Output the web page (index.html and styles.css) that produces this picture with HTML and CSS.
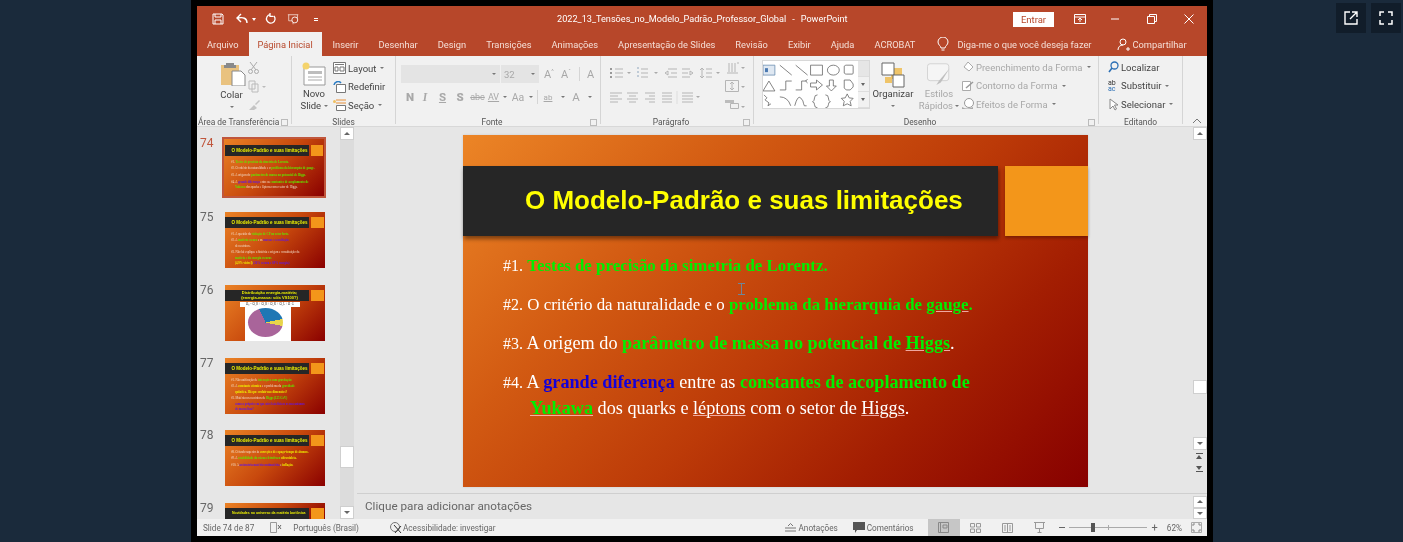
FILE: index.html
```html
<!DOCTYPE html>
<html lang="pt-BR">

<head>
  <meta charset="UTF-8">
  <title>PowerPoint</title>
  <link rel="stylesheet" href="styles.css">
</head>

<body>

  <div class="frame">
    <div class="win">

      <!-- barra de titulo -->
      <div class="titlebar">
        <div class="qat">
          <svg width="12" height="12" viewBox="0 0 12 12" class="qat-save"><path d="M1 1h9l1 1v9H1z M3 1v3h6V1 M3 11V7h6v4" fill="none" stroke="#fff"/></svg>
          <svg width="14" height="12" viewBox="0 0 14 12" class="qat-undo"><path d="M12 10C12 5 8 4 3 5M6 1L2 5l4 4" fill="none" stroke="#fff" stroke-width="1.4"/></svg>
          <span class="caret-w"></span>
          <svg width="12" height="12" viewBox="0 0 12 12" class="qat-redo"><path d="M9 3a4.3 4.3 0 1 1-4-1.4M5 0v3.4h3.4" fill="none" stroke="#fff" stroke-width="1.3"/></svg>
          <svg width="13" height="13" viewBox="0 0 15 13" class="qat-show"><path d="M1 1h12M2 1v7h10V1M7 8v4" fill="none" stroke="#f0d5cc"/><circle cx="9" cy="7" r="3.4" fill="#b7472a" stroke="#fff"/></svg>
          <span class="qat-more"></span>
        </div>
        <div class="doc-title"><span class="doc-name">2022_13_Tensões_no_Modelo_Padrão_Professor_Global</span><span class="doc-sep">-</span>PowerPoint</div>
        <div class="win-ctrl">
          <button class="signin">Entrar</button>
          <svg width="12" height="10" viewBox="0 0 12 10" class="ctrl-ribbon"><path d="M.5.5h11v9H.5zM.5 3h11M6 8V4M4 6l2-2 2 2" fill="none" stroke="#fff"/></svg>
          <svg width="10" height="10" viewBox="0 0 10 10" class="ctrl-min"><path d="M1 5h8" stroke="#fff"/></svg>
          <svg width="10" height="10" viewBox="0 0 10 10" class="ctrl-max"><path d="M.5 2.5h7v7h-7zM2.5 2.5v-2h7v7h-2" fill="none" stroke="#fff"/></svg>
          <svg width="10" height="10" viewBox="0 0 10 10" class="ctrl-close"><path d="M.5.5l9 9M9.5.5l-9 9" stroke="#fff"/></svg>
        </div>
      </div>

      <!-- abas -->
      <div class="tabs">
        <span class="tab tab-file">Arquivo</span>
        <span class="tab tab-active">Página Inicial</span>
        <span class="tab tab-ins">Inserir</span>
        <span class="tab tab-next">Desenhar</span>
        <span class="tab tab-next">Design</span>
        <span class="tab tab-next">Transições</span>
        <span class="tab tab-next">Animações</span>
        <span class="tab tab-next">Apresentação de Slides</span>
        <span class="tab tab-next">Revisão</span>
        <span class="tab tab-next">Exibir</span>
        <span class="tab tab-next">Ajuda</span>
        <span class="tab tab-next">ACROBAT</span>
        <svg width="12" height="15" viewBox="0 0 12 15" class="bulb"><path d="M4 11c0-2-3-3-3-6a5 5 0 0 1 10 0c0 3-3 4-3 6zM4.500 13h3" fill="none" stroke="#fff"/></svg>
        <span class="tab tab-tell">Diga-me o que você deseja fazer</span>
        <svg width="13" height="13" viewBox="0 0 13 13" class="share-ico"><circle cx="6" cy="4" r="3" fill="none" stroke="#fff"/><path d="M1 12c0-3 2-5 5-5M9 11h4M11 9v4" fill="none" stroke="#fff"/></svg>
        <span class="tab tab-share">Compartilhar</span>
      </div>

      <!-- faixa de opcoes -->
      <div class="ribbon">

        <div class="group g-clip">
          <div class="group-body clip-body">
            <div class="big-btn paste">
              <svg width="26" height="24" viewBox="0 0 26 24"><path d="M1 3h18v20H1z" fill="#e9c27f"/><path d="M6 3V1h8v2h2v3H4V3z" fill="#8a8a8a"/><path d="M12 9h9l4 4v11H12z" fill="#fff" stroke="#888"/></svg>
              <span class="lbl">Colar</span>
              <span class="caret"></span>
            </div>
            <div class="clip-small">
              <svg width="11" height="13" viewBox="0 0 11 13"><path d="M2 1l6 8M9 1L3 9" stroke="#aaa" fill="none"/><circle cx="2.500" cy="10.500" r="2" fill="none" stroke="#aaa"/><circle cx="8.500" cy="10.500" r="2" fill="none" stroke="#aaa"/></svg>
              <svg width="18" height="13" viewBox="0 0 18 13"><path d="M1 1h6v8H1zM4 4h6v8H4z" fill="#f1f1f1" stroke="#bbb"/><path d="M14 6h4l-2 2z" fill="#bbb"/></svg>
              <svg width="13" height="12" viewBox="0 0 13 12"><path d="M1 11l5-5 3 3-3 2zM7 5l4-4 1 1-4 4z" fill="#c4c4c4"/></svg>
            </div>
          </div>
          <div class="group-label">Área de Transferência<span class="launch"></span></div>
        </div>

        <div class="group g-slides">
          <div class="group-body slides-body">
            <div class="big-btn newslide">
              <svg width="24" height="24" viewBox="0 0 24 24"><path d="M2 5h21v18H2z" fill="#fff" stroke="#999"/><path d="M6 9h14v3H6z" fill="#bdbdbd"/><path d="M6 15h14M6 18h14" stroke="#aaa"/><circle cx="4" cy="4" r="3.500" fill="#f4d36b"/></svg>
              <span class="lbl">Novo</span>
              <span class="lbl">Slide <i class="caret caret-in"></i></span>
            </div>
            <div class="stack">
              <div class="row-item"><svg width="13" height="12" viewBox="0 0 13 12"><path d="M.5.5h12v11H.5zM2 2.500h9M2 5h3v4H2zM7 5h4v4H7z" fill="#fff" stroke="#777"/></svg>Layout <i class="caret"></i></div>
              <div class="row-item"><svg width="13" height="12" viewBox="0 0 13 12"><path d="M3.500 3.500h9v8h-9z" fill="#fff" stroke="#777"/><path d="M1 4a4 4 0 0 1 7-2" stroke="#2b7cc4" fill="none" stroke-width="1.500"/></svg>Redefinir</div>
              <div class="row-item"><svg width="13" height="12" viewBox="0 0 13 12"><path d="M3 1h10M3 4h10" stroke="#e8913a"/><path d="M3.500 6.500h9v5h-9z" fill="#fff" stroke="#777"/><circle cx="1.500" cy="2.500" r="1.500" fill="#f0c060"/></svg>Seção <i class="caret"></i></div>
            </div>
          </div>
          <div class="group-label">Slides</div>
        </div>

        <div class="group g-font">
          <div class="group-body font-body">
            <div class="font-top">
              <div class="font-name"><i class="caret"></i></div>
              <div class="font-size">32<i class="caret"></i></div>
              <span class="fbtn fbig">A<sup>^</sup></span>
              <span class="fbtn fsmall">A<sup>ˇ</sup></span>
              <span class="fsep"></span>
              <span class="fbtn fclear">A</span>
            </div>
            <div class="font-bot">
              <b class="f-n">N</b><i class="f-i">I</i><span class="f-u">S</span><b class="f-s">S</b><span class="f-abc">abc</span><span class="f-av">AV</span><i class="caret c-av"></i><span class="f-aa">Aa</span><i class="caret"></i><span class="fsep"></span><span class="f-hl">ab</span><i class="caret c-hl"></i><span class="f-col">A</span><i class="caret c-col"></i>
            </div>
          </div>
          <div class="group-label label-launch">Fonte<span class="launch"></span></div>
        </div>

        <div class="group g-para">
          <div class="group-body para-body">
            <svg width="144" height="54" viewBox="0 0 144 54" class="para-icons" fill="none" stroke="#b5b5b5">
              <path d="M4 8h2v2H4zM4 12h2v2H4zM4 16h2v2H4z" fill="#999" stroke="none"/>
              <path d="M9 9h8M9 13h8M9 17h8M35 9h7M35 13h7M35 17h7"/>
              <path d="M31 8h2M31 12h2M31 16h2" stroke="#8fa6bd"/>
              <path d="M59 13l3-2v4zM62 9h9M65 13h6M62 17h9M87 13l-3-2v4zM76 9h8M76 13h6M76 17h8" />
              <path d="M96 8v10M94 10l2-2 2 2M94 16l2 2 2-2M100 9h6M100 13h6M100 17h6"/>
              <path d="M123 3v9M126 3v9M129 3v9M131 3h2M121 13h11"/>
              <path d="M21 12h4l-2 2zM48 12h4l-2 2zM110 12h4l-2 2zM135 7h4l-2 2zM135 26h4l-2 2zM135 46h4l-2 2zM90 36h4l-2 2z" fill="#aaa" stroke="none"/>
              <path d="M4 33h12M4 36h8M4 39h12M4 42h8M21 33h11M23 36h7M21 39h11M23 42h7M39 33h10M43 36h6M39 39h10M43 42h6M56 33h10M56 36h10M56 39h10M56 42h10M76 33h11M76 36h11M76 39h11M76 42h11"/>
              <path d="M71 31v13" stroke="#ddd"/>
              <path d="M119.500 20.500h13v11h-13zM126 22v8M124 24l2-2 2 2M124 28l2 2 2-2"/>
              <path d="M119 40h9v3h-9z" fill="#bcbcbc" stroke="none"/>
              <path d="M124.500 43.500h8v5h-8z"/>
            </svg>
          </div>
          <div class="group-label label-launch">Parágrafo<span class="launch"></span></div>
        </div>

        <div class="group g-draw">
          <div class="group-body draw-body">
            <div class="gallery">
              <svg width="96" height="47" viewBox="0 0 96 47" fill="none" stroke="#666" stroke-width=".8">
                <g transform="translate(-3 0)">
                  <path d="M3 4h12v10H3z" fill="#dfe8f2" stroke="#6a8db0"/><path d="M5 7h3v4H5z" fill="#4a78b0" stroke="none"/>
                  <path d="M20 4l12 10M36 4l12 10M51 4h12v10H51zM85 5q1-1 2-1h6q1 0 1 1v7q0 1-1 1h-6q-1 0-2-1z"/>
                  <ellipse cx="74" cy="9" rx="6" ry="5"/>
                  <path d="M3 30l6-10 6 10zM20 29h6V20h6M36 29h6V20h5M48 22l-2-2 2-2M51 22h6v-3l6 5-6 5v-3h-6zM70 19h4v6h3l-5 5-5-5h3zM85 19h6l3 4v3l-3 3h-4l-2-2z"/>
                  <path d="M4 34l3 3-2 2 4 3-1 3 3-2M20 36q8 0 11 9M35 45q3-11 6-8t3 6 3 2M58 34q-3 0-3 3t-2 4q2 0 2 3t3 3M66 34q3 0 3 3t2 4q-2 0-2 3t-3 3"/>
                  <path d="M88 33l2 4 4 .5-3 3 1 4.500-4-2-4 2 1-4.500-3-3 4-.5z"/>
                </g>
              </svg>
              <div class="gallery-scroll">
                <span class="gs gs-up"></span><span class="gs gs-down"></span><span class="gs gs-more"></span>
              </div>
            </div>
            <div class="big-btn arrange">
              <svg width="24" height="26" viewBox="0 0 24 26"><path d="M10 6h11v11H10z" fill="#efc469"/><path d="M1 1h12v12H1z" fill="#fff" stroke="#666"/><path d="M12 13h11v12H12z" fill="#fff" stroke="#666"/><path d="M4 15h7v6H4z" fill="#efc469"/></svg>
              <span class="lbl">Organizar</span>
              <span class="caret"></span>
            </div>
            <div class="big-btn quick">
              <svg width="24" height="24" viewBox="0 0 26 27"><path d="M3 2h18q3 0 3 3v13q0 3-3 3H3q-3 0-3-3V5q0-3 3-3z" fill="#f5f5f5" stroke="#cfcfcf"/><path d="M25 7L13 21l-3 5 5-3z" fill="#bfbfbf"/></svg>
              <span class="lbl">Estilos</span>
              <span class="lbl">Rápidos <i class="caret"></i></span>
            </div>
            <div class="stack stack-off">
              <div class="row-item"><svg width="12" height="12" viewBox="0 0 12 12"><path d="M2 6l4-5 5 5-4 4z" fill="#fff" stroke="#aaa"/></svg>Preenchimento da Forma <i class="caret"></i></div>
              <div class="row-item"><svg width="12" height="12" viewBox="0 0 12 12"><path d="M.5 1.500h8v9h-8z" fill="#fff" stroke="#aaa"/><path d="M4 8l7-6" stroke="#999" stroke-width="1.500"/></svg>Contorno da Forma <i class="caret"></i></div>
              <div class="row-item"><svg width="12" height="12" viewBox="0 0 12 12"><circle cx="7" cy="5" r="4.500" fill="#fff" stroke="#999"/><path d="M0 9q5 3 11 0v2H0z" fill="#aaa"/></svg>Efeitos de Forma <i class="caret"></i></div>
            </div>
          </div>
          <div class="group-label label-launch">Desenho<span class="launch"></span></div>
        </div>

        <div class="group g-edit">
          <div class="group-body edit-body">
            <div class="stack stack-edit">
              <div class="row-item"><svg width="11" height="12" viewBox="0 0 11 12"><circle cx="6.500" cy="4.500" r="3.500" fill="none" stroke="#2b6fb5" stroke-width="1.300"/><path d="M4 7L1 11" stroke="#2b6fb5" stroke-width="1.500"/></svg>Localizar</div>
              <div class="row-item"><span class="abac"><b>ab</b><em>ac</em></span>Substituir <i class="caret caret-far"></i></div>
              <div class="row-item"><svg width="11" height="13" viewBox="0 0 11 13"><path d="M2 1v10l3-3 2 4 1.500-1-2-4h3.500z" fill="#fff" stroke="#888"/></svg>Selecionar <i class="caret"></i></div>
            </div>
          </div>
          <div class="group-label">Editando</div>
        </div>

        <svg width="10" height="6" viewBox="0 0 10 6" class="collapse"><path d="M1 5l4-4 4 4" fill="none" stroke="#777"/></svg>
      </div>

      <!-- area principal -->
      <div class="main">
        <div class="thumbs">
          <div class="thumb-list">

            <div class="thumb-row thumb-sel">
              <span class="num">74</span>
              <div class="mini">
                <div class="mini-head"><div class="mini-band">O Modelo-Padrão e suas limitações</div><span class="mini-sq"></span></div>
                <div class="mini-body">
                  <p>#1. <em class="g">Testes de precisão da simetria de Lorentz.</em></p>
                  <p>#2. O critério da naturalidade e o <em class="g">problema da hierarquia de gauge.</em></p>
                  <p>#3. A origem do <em class="g">parâmetro de massa no potencial de Higgs.</em></p>
                  <p>#4. A <em class="b">grande diferença</em> entre as <em class="g">constantes de acoplamento de</em></p>
                  <p class="in"><em class="g">Yukawa</em> dos quarks e léptons com o setor de Higgs.</p>
                </div>
              </div>
            </div>

            <div class="thumb-row">
              <span class="num">75</span>
              <div class="mini">
                <div class="mini-head"><div class="mini-band">O Modelo-Padrão e suas limitações</div><span class="mini-sq"></span></div>
                <div class="mini-body">
                  <p>#1. A questão da <em class="g">violação de CP no setor forte.</em></p>
                  <p>#2. A <em class="g">matéria escura</em> e as <em class="b">massas e a oscilação</em></p>
                  <p class="in">de neutrinos.</p>
                  <p>#3. Não há explique a história e origem e constituição da</p>
                  <p class="in"><em class="g">matéria e da energia escuras</em></p>
                  <p class="in"><em class="y">(4,9% visível)</em> <em class="b">(26% escura e 69% energia)</em></p>
                </div>
              </div>
            </div>

            <div class="thumb-row">
              <span class="num">76</span>
              <div class="mini">
                <div class="mini-head"><div class="mini-band mini-two">Distribuição energia-matéria;<br>(energia-massa: sóis VS100?)</div><span class="mini-sq"></span></div>
                <div class="mini-chart">
                  <div class="mini-formula">Ω₀ = Ω_R + Ω_B + Ω_K + Ω_L + Ω_G</div>
                  <div class="mini-pie"><span class="pie"></span></div>
                </div>
              </div>
            </div>

            <div class="thumb-row thumb-short">
              <span class="num">77</span>
              <div class="mini">
                <div class="mini-head"><div class="mini-band">O Modelo-Padrão e suas limitações</div><span class="mini-sq"></span></div>
                <div class="mini-body">
                  <p>#1. Não unificação de <em class="g">interações com gravitação</em></p>
                  <p>#2. A <em class="y">constante cósmica</em> e o problema da <em class="g">gravidade</em></p>
                  <p class="in"><em class="y">quântica. Há que evoluir nas dimensões?</em></p>
                  <p>#3. Matéria nos neutrinos de <em class="g">Higgs (125 GeV)</em></p>
                  <p class="in"><em class="b">como o próprio em que nível são físicos os mecanismos</em></p>
                  <p class="in"><em class="b">de massa fina?</em></p>
                </div>
              </div>
            </div>

            <div class="thumb-row">
              <span class="num">78</span>
              <div class="mini">
                <div class="mini-head"><div class="mini-band">O Modelo-Padrão e suas limitações</div><span class="mini-sq"></span></div>
                <div class="mini-body">
                  <p>#8. O fundo superior às <em class="y">correções de espaço-tempo de átomos.</em></p>
                  <p>#9. A <em class="g">estabilidade do vácuo eletrofraco</em> <em class="y">ultravioleta.</em></p>
                  <p>#10. A <em class="b">assimetria matéria-antimatéria</em> e <em class="y">inflação.</em></p>
                </div>
              </div>
            </div>

            <div class="thumb-row thumb-cut">
              <span class="num">79</span>
              <div class="mini">
                <div class="mini-head"><div class="mini-band mini-left">Novidades no universo da matéria bariônica</div><span class="mini-sq"></span></div>
              </div>
            </div>

          </div>

          <div class="vscroll vscroll-thumbs">
            <span class="sbtn sbtn-up"></span>
            <span class="sthumb"></span>
            <span class="sbtn sbtn-down"></span>
          </div>
        </div>

        <div class="edit">
          <div class="edit-top">
            <div class="canvas">
              <div class="slide">
                <div class="slide-head">
                  <h1 class="slide-band">O Modelo-Padrão e suas limitações</h1>
                  <span class="slide-sq"></span>
                </div>
                <div class="slide-body">
                  <p class="line line-1"><small>#1.</small> <b class="green">Testes de precisão da simetria de Lorentz.</b></p>
                  <p class="line line-2"><small>#2.</small> O critério da naturalidade e o <b class="green">problema da hierarquia de <u class="sp">gauge</u>.</b></p>
                  <p class="line line-3"><small>#3.</small> A origem do <b class="green">parâmetro de massa no potencial de <u class="sp">Higgs</u></b>.</p>
                  <p class="line line-4"><small>#4.</small> A <b class="blue">grande diferença</b> entre as <b class="green">constantes de acoplamento de</b></p>
                  <p class="line line-5"><b class="green"><u class="sp">Yukawa</u></b> dos quarks e <u class="sp">léptons</u> com o setor de <u class="sp">Higgs</u>.</p>
                </div>
                <svg width="7" height="12" viewBox="0 0 7 12" class="ibeam"><path d="M0 .5h7M0 11.500h7M3.500 0v12" stroke="#6f8598"/></svg>
              </div>
            </div>
            <div class="vscroll vscroll-edit">
              <span class="sbtn sbtn-up"></span>
              <span class="sthumb sthumb-edit"></span>
              <span class="sbtn sbtn-down"></span>
              <span class="snav snav-up"></span>
              <span class="snav snav-down"></span>
            </div>
          </div>
          <div class="notes">
            <span class="notes-text">Clique para adicionar anotações</span>
            <div class="vscroll vscroll-notes">
              <span class="sbtn sbtn-up"></span>
              <span class="sbtn sbtn-down"></span>
            </div>
          </div>
        </div>
      </div>

      <!-- barra de status -->
      <div class="status">
        <span class="st-slide">Slide 74 de 87</span>
        <svg width="12" height="11" viewBox="0 0 12 11" class="st-check"><path d="M.5.5h6v10h-6z" fill="none" stroke="#999"/><path d="M8 3l3 4M11 3L8 7" stroke="#666"/></svg>
        <span class="st-lang">Português (Brasil)</span>
        <svg width="12" height="13" viewBox="0 0 12 13" class="st-acc"><circle cx="5" cy="6" r="4.500" fill="none" stroke="#777"/><path d="M4 4l7 8M11 5l-6 7" stroke="#333"/></svg>
        <span class="st-acc-text">Acessibilidade: investigar</span>
        <div class="st-right">
          <svg width="11" height="9" viewBox="0 0 11 9" class="st-ico"><path d="M0 5h11M0 8h11M3 3l2.500-2.500L8 3" fill="none" stroke="#777"/></svg>
          <span class="st-notes">Anotações</span>
          <svg width="12" height="11" viewBox="0 0 12 11" class="st-ico st-ico-com"><path d="M0 0h12v8H4l-2 3V8H0z" fill="#555"/></svg>
          <span class="st-com">Comentários</span>
          <span class="view view-on"><svg width="11" height="11" viewBox="0 0 11 11"><path d="M.5.500h10v10H.5zM2.500.500v10" fill="none" stroke="#888"/><path d="M5 3h4v3H5z" fill="none" stroke="#888"/></svg></span>
          <span class="view"><svg width="11" height="10" viewBox="0 0 11 10"><path d="M.5.5h4v3.500h-4zM6.500.5h4v3.500h-4zM.5 6h4v3.500h-4zM6.500 6h4v3.500h-4z" fill="none" stroke="#999"/></svg></span>
          <span class="view"><svg width="11" height="10" viewBox="0 0 11 10"><path d="M.5.5h10v9H.5zM5.500.5v9M2 3h2M2 5h2M2 7h2M7 3h2M7 5h2M7 7h2" fill="none" stroke="#999"/></svg></span>
          <span class="view"><svg width="11" height="11" viewBox="0 0 11 11"><path d="M0 .5h11M1.500.5v6h8v-6M5.500 6.500v4M3.500 10.500h4" fill="none" stroke="#999"/></svg></span>
          <span class="zoom-minus"></span>
          <div class="slider"><span class="slider-mid"></span><span class="slider-knob"></span></div>
          <span class="zoom-plus">+</span>
          <span class="zoom-val">62%</span>
          <svg width="11" height="11" viewBox="0 0 11 11" class="st-fit"><path d="M.5.5h10v10H.5z" fill="none" stroke="#aaa"/><path d="M2 4V2h2M7 2h2v2M9 7v2H7M4 9H2V7" fill="none" stroke="#888"/></svg>
        </div>
      </div>

    </div>
  </div>

  <div class="overlay-btns">
    <span class="ov-btn"><svg width="14" height="14" viewBox="0 0 14 14"><path d="M6 1H1v12h12V8M8 1h5v5M13 1L6 8" fill="none" stroke="#fff" stroke-width="1.400"/></svg></span>
    <span class="ov-btn"><svg width="14" height="14" viewBox="0 0 14 14"><path d="M1 5V1h4M9 1h4v4M13 9v4H9M5 13H1V9" fill="none" stroke="#fff" stroke-width="1.500"/></svg></span>
  </div>

</body>

</html>
```

FILE: styles.css
```css
* {
  box-sizing: border-box;
}

html,
body {
  margin: 0;
  height: 542px;
  overflow: hidden;
}

body {
  background: #1a2a3b;
  font-family: "Roboto", "Liberation Sans", sans-serif;
  font-size: 9.5px;
  color: #444;
}

.frame {
  width: 1022px;
  height: 542px;
  margin-left: 191px;
  padding: 6px 6px 6px 6px;
  background: #000;
}

.win {
  width: 1010px;
  height: 530px;
  display: flex;
  flex-direction: column;
  background: #e6e6e6;
  filter: blur(0.3px);
}

/* title bar */
.titlebar {
  height: 26px;
  display: flex;
  align-items: center;
  background: #b7472a;
  color: #fff;
}

.qat {
  width: 360px;
  display: flex;
  align-items: center;
  padding-left: 15px;
}

.qat-undo {
  margin-left: 11px;
}

.caret-w {
  margin-left: 3px;
  border: 2px solid transparent;
  border-top: 3px solid #fff;
  border-bottom: 0;
}

.qat-redo {
  margin-left: 9px;
}

.qat-show {
  margin-left: 10px;
}

.qat-more {
  margin-left: 14px;
  width: 4px;
  height: 3px;
  border-top: 1px solid #fff;
  border-bottom: 1px solid #fff;
}

.doc-title {
  font-size: 9.150px;
  white-space: nowrap;
}

.doc-sep {
  margin: 0 6px;
}

.win-ctrl {
  margin-left: auto;
  display: flex;
  align-items: center;
  padding-right: 13px;
}

.signin {
  width: 41px;
  height: 15px;
  border: 0;
  padding: 0;
  background: #fff;
  color: #b7472a;
  font: 9.5px "Roboto", sans-serif;
}

.ctrl-ribbon {
  margin-left: 20px;
}

.ctrl-min {
  margin-left: 24px;
}

.ctrl-max {
  margin-left: 27px;
}

.ctrl-close {
  margin-left: 27px;
}

/* tabs */
.tabs {
  height: 24px;
  display: flex;
  align-items: center;
  background: #b7472a;
  color: #f5dfd7;
  padding-left: 10px;
  white-space: nowrap;
}

.tab {
  flex: none;
  font-size: 9.300px;
}

.tab-active {
  margin-left: 10px;
  width: 73px;
  height: 24px;
  line-height: 25px;
  text-align: center;
  background: #f1f1f1;
  color: #b7472a;
}

.tab-ins {
  margin-left: 11px;
}

.tab-next {
  margin-left: 20px;
}

.bulb {
  flex: none;
  margin-left: 22px;
}

.tab-tell {
  margin-left: 8px;
}

.share-ico {
  flex: none;
  margin-left: 25px;
}

.tab-share {
  margin-left: 3px;
}

/* ribbon */
.ribbon {
  height: 71px;
  display: flex;
  background: #f1f1f1;
  border-bottom: 1px solid #d8d8d8;
  color: #444;
}

.group {
  display: flex;
  flex-direction: column;
  border-right: 1px solid #d5d5d5;
  margin-bottom: 2px;
}

.group-body {
  height: 61px;
  display: flex;
}

.group-label {
  height: 7px;
  position: relative;
  text-align: center;
  font-size: 8.400px;
  line-height: 11px;
  color: #555;
  white-space: nowrap;
}

.label-launch {
  padding-right: 12px;
}

.launch {
  position: absolute;
  right: 3px;
  top: 2px;
  width: 7px;
  height: 7px;
  border: 1px solid #bbb;
}

.g-clip {
  width: 95px;
}

.g-slides {
  width: 104px;
}

.g-font {
  width: 205px;
}

.g-para {
  width: 153px;
}

.g-draw {
  width: 345px;
}

.g-edit {
  width: 84px;
}

.g-clip .group-label {
  text-align: left;
  padding-left: 1px;
}

.big-btn {
  display: flex;
  flex-direction: column;
  align-items: center;
}

.big-btn svg {
  flex: none;
}

.lbl {
  line-height: 12px;
  white-space: nowrap;
}

.caret {
  display: inline-block;
  flex: none;
  width: 0;
  height: 0;
  border-left: 2px solid transparent;
  border-right: 2px solid transparent;
  border-top: 2px solid #777;
  vertical-align: middle;
}

.clip-body {
  padding: 6px 0 0 22px;
}

.paste {
  width: 28px;
}

.paste .lbl {
  margin-top: 3px;
  margin-left: -3px;
}

.paste .caret {
  margin-top: 5px;
  margin-left: -3px;
}

.clip-small {
  display: flex;
  flex-direction: column;
  gap: 6px;
  margin: -1px 0 0 1px;
}

.slides-body {
  padding: 6px 0 0 9px;
}

.newslide {
  width: 26px;
}

.newslide .lbl:nth-of-type(1) {
  margin-top: 2px;
}

.stack {
  display: flex;
  flex-direction: column;
  gap: 6.500px;
  margin-left: 6px;
}

.row-item {
  display: flex;
  align-items: center;
  gap: 2px;
  height: 12px;
  white-space: nowrap;
}

.row-item .caret {
  margin-left: 2px;
}

/* fonte */
.font-body {
  flex-direction: column;
  padding: 9px 0 0 5px;
  color: #a8a8a8;
}

.font-top {
  display: flex;
  align-items: center;
  height: 18px;
}

.font-name {
  flex: none;
  width: 99px;
  height: 18px;
  background: #e4e4e4;
  display: flex;
  align-items: center;
  justify-content: flex-end;
  padding-right: 4px;
}

.font-size {
  flex: none;
  width: 38px;
  height: 18px;
  margin-left: 1px;
  background: #e4e4e4;
  display: flex;
  align-items: center;
  justify-content: space-between;
  padding: 0 4px 0 3px;
}

.fbtn {
  flex: none;
  font-size: 11px;
  margin-left: 3px;
  width: 14px;
}

.fbig {
  margin-left: 5px;
}

.fbtn sup {
  font-size: 6px;
  line-height: 0;
}

.fsep {
  flex: none;
  width: 1px;
  height: 14px;
  background: #d5d5d5;
  margin: 0 4px;
}

.font-bot {
  display: flex;
  align-items: center;
  height: 18px;
  margin-top: 5px;
  font-size: 11.500px;
  padding-left: 2px;
  font-weight: 700;
}

.font-bot > span,
.font-bot > b,
.font-bot > i:not(.caret) {
  flex: none;
  text-align: center;
}

.f-n {
  width: 14px;
}

.f-i {
  width: 16px;
  font-family: "Liberation Serif", serif;
}

.f-u {
  width: 19px;
  text-decoration: underline;
}

.f-s {
  width: 16px;
}

.f-abc {
  width: 19px;
  font-size: 9px;
  font-weight: 400;
  text-decoration: line-through;
}

.f-av {
  width: 13px;
  font-size: 9px;
  font-weight: 400;
  text-decoration: underline;
}

.c-av {
  margin-left: 3px;
}

.f-aa {
  width: 22px;
  font-weight: 400;
  font-size: 10.500px;
}

.f-hl {
  width: 12px;
  font-size: 8px;
  font-weight: 400;
  text-decoration: underline;
}

.c-hl {
  margin-left: 7px;
}

.f-col {
  width: 22px;
  font-weight: 400;
}

.c-col {
  margin-left: 1px;
}

.para-body {
  padding: 4px 0 0 5px;
}

/* desenho */
.draw-body {
  padding: 4px 0 0 8px;
}

.gallery {
  display: flex;
  flex: none;
  width: 108px;
  height: 49px;
  border: 1px solid #d8d8d8;
  background: #fff;
}

.gallery-scroll {
  width: 11px;
  display: flex;
  flex-direction: column;
  background: #f1f1f1;
  margin-left: auto;
}

.gs {
  flex: 1;
  border-bottom: 1px solid #ddd;
  position: relative;
}

.gs-up {
  background: #e6e6e6;
}

.gs-down::after,
.gs-more::after {
  content: "";
  position: absolute;
  left: 3px;
  top: 6px;
  border: 2px solid transparent;
  border-top: 3px solid #666;
  border-bottom: 0;
}

.arrange {
  flex: none;
  width: 46px;
  margin-left: 0;
  padding-top: 2px;
}

.arrange .caret {
  margin-top: 5px;
}

.quick {
  flex: none;
  width: 40px;
  margin-left: 3px;
  padding-top: 2px;
  color: #a8a8a8;
}

.quick .lbl:nth-of-type(1) {
  margin-top: 2px;
}

.stack-off {
  color: #a8a8a8;
  padding-top: 1px;
  margin-left: 3px;
}

.edit-body {
  padding-top: 5px;
}

.stack-edit {
  margin-left: 9px;
}

.abac {
  width: 11px;
  display: flex;
  flex-direction: column;
  font-size: 7px;
  line-height: 6px;
}

.abac b {
  color: #333;
  font-weight: 400;
}

.abac em {
  font-style: normal;
  color: #2b6fb5;
}

.caret-far {
  margin-left: 6px;
}

.collapse {
  margin: 62px 0 0 9px;
}

/* principal */
.main {
  flex: 1;
  display: flex;
  min-height: 0;
}

.thumbs {
  flex: none;
  width: 160px;
  display: flex;
  border-right: 3px solid #e6e6e6;
  overflow: hidden;
}

.thumb-list {
  width: 143px;
  height: 392px;
  overflow: hidden;
  background: #e6e6e6;
  padding-top: 11px;
}

.thumb-row {
  display: flex;
  height: 73px;
  padding-left: 3px;
}

.thumb-short {
  height: 72px;
}

.thumb-sel {
  height: 74px;
}

.num {
  flex: none;
  width: 25px;
  font-size: 12px;
  color: #666;
  line-height: 10px;
}

.thumb-sel .num {
  color: #c0563c;
}

.mini {
  width: 100px;
  height: 56px;
  overflow: hidden;
  background: linear-gradient(135deg, #ea8225 0%, #c8490d 50%, #8a0000 100%);
  padding-top: 5px;
}

.thumb-sel .mini {
  flex: none;
  width: 104px;
  height: 61px;
  margin: -1px 0 0 -3px;
  border: 2px solid #c0563c;
  padding: 6px 1px 0 1px;
}

.thumb-cut .mini {
  height: 18px;
}

.mini-head {
  display: flex;
  height: 11px;
}

.mini-band {
  flex: none;
  width: 84px;
  padding-left: 5px;
  background: #262626;
  color: #eef000;
  font: 700 4.500px "Liberation Sans", sans-serif;
  line-height: 11px;
  text-align: center;
  white-space: nowrap;
  overflow: hidden;
}

.mini-two {
  font-size: 4px;
  line-height: 4.500px;
  padding-top: 1px;
}

.mini-left {
  text-align: left;
  padding-left: 7px;
  font-size: 3.500px;
}

.mini-sq {
  width: 13px;
  margin-left: 2px;
  background: #f3961a;
}

.mini-body {
  padding: 3.500px 0 0 6px;
  font: 3px "Liberation Serif", serif;
  color: #f2ddc8;
}

.mini-body p {
  margin: 0 0 2.800px;
  white-space: nowrap;
  overflow: hidden;
}

.mini-body p.in {
  margin-top: -1.500px;
  padding-left: 4px;
}

.mini-body em {
  font-style: normal;
  font-weight: 700;
}

.mini-body .g {
  color: #62e600;
}

.mini-body .b {
  color: #6418dc;
}

.mini-body .y {
  color: #eeee00;
}

.mini-chart {
  text-align: center;
}

.mini-formula {
  width: 60px;
  height: 5px;
  margin: 1px 0 0 15px;
  background: #fff;
  color: #333;
  font: 3px/5px "Liberation Serif", serif;
  white-space: nowrap;
  overflow: hidden;
}

.mini-pie {
  width: 46px;
  height: 35px;
  margin-left: 20px;
  background: #fff;
  display: flex;
  padding: 1px 0 0 3px;
}

.pie {
  width: 35px;
  height: 29px;
  border-radius: 50%;
  background: conic-gradient(#1f77b4 0 78deg, #e8d44a 78deg 102deg, #a9649a 102deg 335deg, #1f77b4 335deg);
}

.vscroll {
  width: 14px;
  flex: none;
  display: flex;
  flex-direction: column;
  background: #dcdcdc;
}

.sbtn {
  height: 13px;
  flex: none;
  background: #fff;
  border: 1px solid #cfcfcf;
  position: relative;
}

.sbtn::after {
  content: "";
  position: absolute;
  left: 3px;
  top: 4px;
  border: 3px solid transparent;
  border-top: 3px solid #666;
  border-bottom: 0;
}

.sbtn-up::after {
  border: 3px solid transparent;
  border-top: 0;
  border-bottom: 3px solid #666;
}

.sthumb {
  height: 22px;
  flex: none;
  margin-top: 306px;
  background: #fff;
  border: 1px solid #cfcfcf;
}

.vscroll-thumbs .sthumb {
  margin-bottom: auto;
}

.edit {
  flex: 1;
  min-width: 0;
  display: flex;
  flex-direction: column;
}

.edit-top {
  height: 366px;
  display: flex;
}

.canvas {
  flex: 1;
  padding: 8px 0 0 106px;
}

.vscroll-edit {
  width: 14px;
  background: #e6e6e6;
}

.sthumb-edit {
  height: 14px;
  margin-top: 240px;
}

.vscroll-edit .sbtn-down {
  margin-top: 43px;
}

.snav {
  height: 13px;
  flex: none;
  position: relative;
}

.snav::before {
  content: "";
  position: absolute;
  left: 3px;
  top: 3px;
  width: 7px;
  height: 1px;
  background: #555;
}

.snav::after {
  content: "";
  position: absolute;
  left: 3px;
  top: 5px;
  border: 3px solid transparent;
  border-bottom: 4px solid #555;
  border-top: 0;
}

.snav-down::after {
  border: 3px solid transparent;
  border-top: 4px solid #555;
  border-bottom: 0;
  top: 3px;
}

.snav-down::before {
  top: 8px;
}

/* slide */
.slide {
  position: relative;
  width: 625px;
  height: 352px;
  padding-top: 31px;
  background: linear-gradient(135deg, #ec8526 0%, #d25a12 30%, #bc3a08 55%, #a31e02 75%, #870000 100%);
  box-shadow: 0 0 2px #c9c9c9;
}

.slide-head {
  display: flex;
  height: 70px;
}

.slide-band {
  width: 535px;
  margin: 0;
  padding-left: 62px;
  background: #262626;
  box-shadow: 1px 3px 4px rgba(0, 0, 0, 0.45);
  color: #ffff00;
  font: 700 26px/68px "Liberation Sans", sans-serif;
  white-space: nowrap;
}

.slide-sq {
  width: 83px;
  margin-left: 7px;
  background: #f3961a;
  box-shadow: 0 2px 3px rgba(0, 0, 0, 0.3);
}

.slide-body {
  padding: 20px 0 0 40px;
  font-family: "Liberation Serif", serif;
  color: #fff;
}

.line {
  margin: 0;
  height: 39px;
  line-height: 19px;
  font-size: 16.900px;
  white-space: nowrap;
}

.line small {
  font-size: 16px;
}

.line-3,
.line-4,
.line-5 {
  font-size: 18.200px;
}

.line-4 {
  height: 26px;
}

.line-5 {
  padding-left: 27px;
}

.green {
  color: #00ee00;
}

.blue {
  color: #1400d8;
}

.sp {
  text-decoration: underline;
  text-decoration-color: rgba(255, 200, 200, 0.8);
  text-decoration-thickness: 1px;
}

.ibeam {
  position: absolute;
  left: 275px;
  top: 148px;
}

.notes {
  flex: 1;
  display: flex;
  border-top: 1px solid #cfcfcf;
  align-items: stretch;
}

.notes-text {
  flex: 1;
  padding: 5px 0 0 8px;
  font-size: 11.700px;
  color: #666;
}

.vscroll-notes {
  width: 14px;
  background: #e6e6e6;
  padding-top: 2px;
}

.vscroll-notes .sbtn {
  height: 11.500px;
}

.vscroll-notes .sbtn::after {
  top: 3px;
}

/* status */
.status {
  height: 17px;
  flex: none;
  display: flex;
  align-items: center;
  background: #f1f1f1;
  color: #666;
  font-size: 8.200px;
  white-space: nowrap;
}

.st-slide {
  margin-left: 6px;
}

.st-check {
  margin-left: 16px;
}

.st-lang {
  margin-left: 11px;
}

.st-acc {
  margin-left: 31px;
}

.st-acc-text {
  margin-left: 1px;
}

.st-right {
  margin-left: auto;
  display: flex;
  align-items: center;
  height: 17px;
}

.st-notes {
  margin-left: 3px;
}

.st-ico-com {
  margin-left: 15px;
}

.st-com {
  margin-left: 2px;
}

.view {
  width: 32px;
  height: 17px;
  display: flex;
  align-items: center;
  justify-content: center;
}

.view-on {
  margin-left: 14px;
  background: #c6c6c6;
}

.zoom-minus {
  width: 6px;
  height: 1px;
  margin-left: 3px;
  background: #666;
}

.slider {
  position: relative;
  width: 78px;
  height: 1px;
  margin-left: 4px;
  background: #aaa;
}

.slider-mid {
  position: absolute;
  left: 39px;
  top: -2px;
  width: 1px;
  height: 5px;
  background: #aaa;
}

.slider-knob {
  position: absolute;
  left: 22px;
  top: -4px;
  width: 4px;
  height: 9px;
  background: #555;
}

.zoom-plus {
  margin-left: 5px;
  font-size: 11px;
}

.zoom-val {
  margin-left: 9px;
}

.st-fit {
  margin: 0 5px 0 9px;
}

/* botoes sobre a pagina */
.overlay-btns {
  position: absolute;
  top: 3px;
  left: 1336px;
  display: flex;
  gap: 5px;
}

.ov-btn {
  width: 30px;
  height: 30px;
  display: flex;
  align-items: center;
  justify-content: center;
  background: #111d2a;
}
```
